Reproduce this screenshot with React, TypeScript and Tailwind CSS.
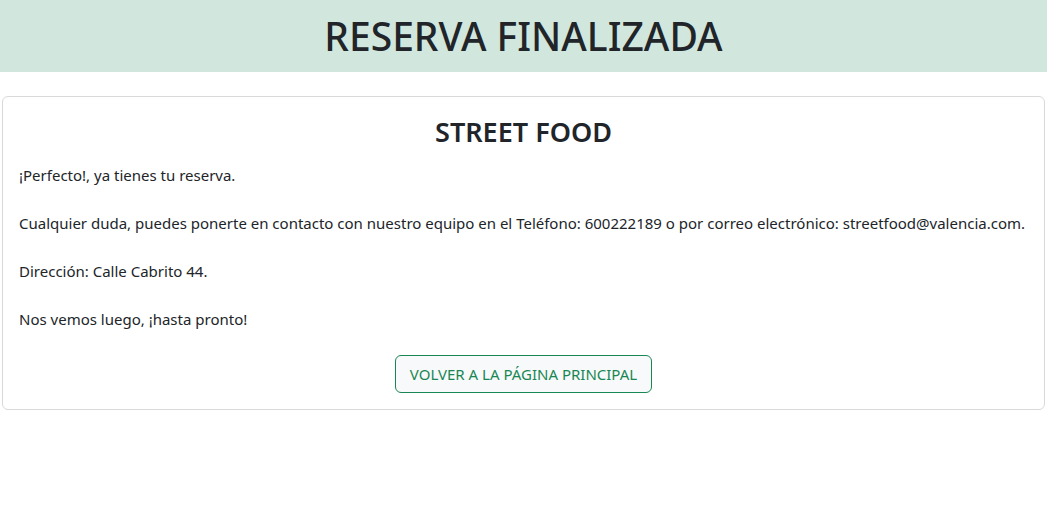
export default function App() {
  return (
    <div className="min-h-screen bg-white text-[#212529] font-['Noto_Sans','Open_Sans',sans-serif]">
      <header className="h-[72px] bg-[#d1e7dd] flex items-center justify-center">
        <h1 className="text-[39px] leading-[1.2] font-medium">RESERVA FINALIZADA</h1>
      </header>

      <main className="mx-[2px] mt-6 rounded-md border border-[#d9d9d9] p-4">
        <h2 className="text-center text-[27px] leading-[38px] font-semibold mb-3">STREET FOOD</h2>
        <div className="flex flex-col gap-6 text-[15px] leading-6">
          <p>¡Perfecto!, ya tienes tu reserva.</p>
          <p>
            Cualquier duda, puedes ponerte en contacto con nuestro equipo en el Teléfono: 600222189 o por correo
            electrónico: streetfood@valencia.com.
          </p>
          <p>Dirección: Calle Cabrito 44.</p>
          <p>Nos vemos luego, ¡hasta pronto!</p>
        </div>
        <div className="flex justify-center mt-6">
          <button className="h-[38px] px-[14px] rounded-md border border-[#198754] bg-[#f8f9fa] text-[#198754] text-[15px]">
            VOLVER A LA PÁGINA PRINCIPAL
          </button>
        </div>
      </main>
    </div>
  );
}
